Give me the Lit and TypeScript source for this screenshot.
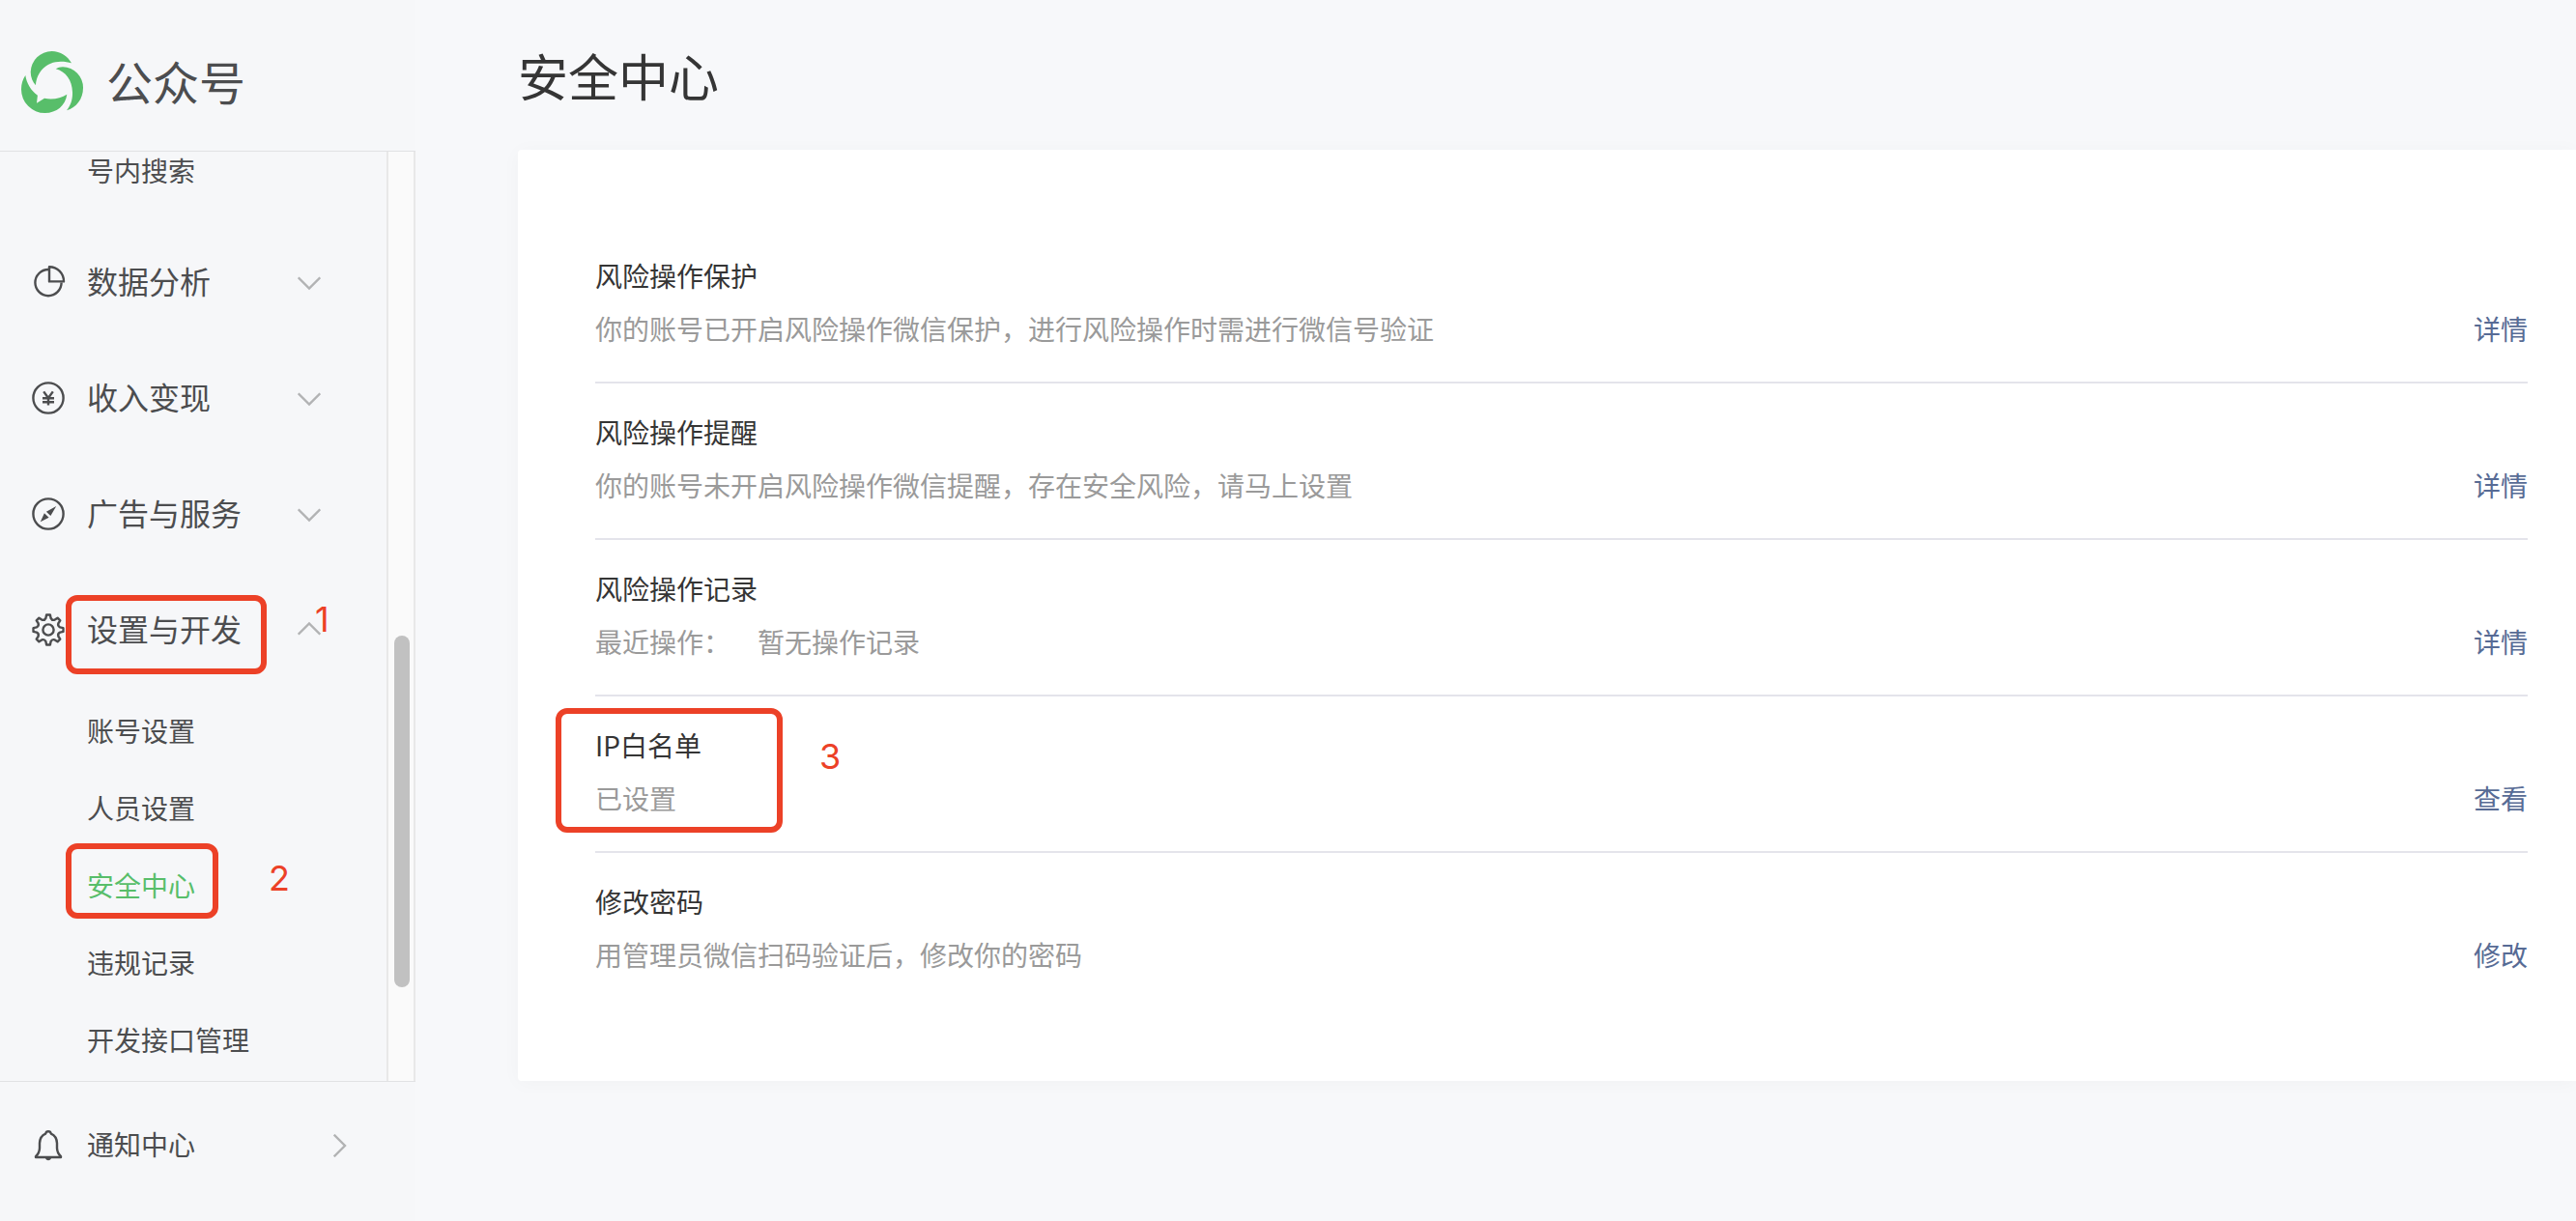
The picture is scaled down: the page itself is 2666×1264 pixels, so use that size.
import { LitElement, html, css, svg, nothing } from "lit";
import { customElement, property } from "lit/decorators.js";
import { classMap } from "lit/directives/class-map.js";

type IconName = "pie" | "yen" | "compass" | "gear" | "bell";

interface Group {
  icon: IconName;
  label: string;
  open?: boolean;
  mark?: string;
}

interface SubItem {
  label: string;
  active?: boolean;
  mark?: string;
}

interface SecurityRow {
  title: string;
  desc: string;
  extra?: string;
  action: string;
  mark?: string;
}

const GROUPS: Group[] = [
  { icon: "pie", label: "数据分析" },
  { icon: "yen", label: "收入变现" },
  { icon: "compass", label: "广告与服务" },
  { icon: "gear", label: "设置与开发", open: true, mark: "1" },
];

const SETTINGS: SubItem[] = [
  { label: "账号设置" },
  { label: "人员设置" },
  { label: "安全中心", active: true, mark: "2" },
  { label: "违规记录" },
  { label: "开发接口管理" },
];

const ROWS: SecurityRow[] = [
  {
    title: "风险操作保护",
    desc: "你的账号已开启风险操作微信保护，进行风险操作时需进行微信号验证",
    action: "详情",
  },
  {
    title: "风险操作提醒",
    desc: "你的账号未开启风险操作微信提醒，存在安全风险，请马上设置",
    action: "详情",
  },
  { title: "风险操作记录", desc: "最近操作：", extra: "暂无操作记录", action: "详情" },
  { title: "IP白名单", desc: "已设置", action: "查看", mark: "3" },
  { title: "修改密码", desc: "用管理员微信扫码验证后，修改你的密码", action: "修改" },
];

/** Outline of an eight-toothed gear centred in a 36-unit box. */
function gearPath(): string {
  const at = (deg: number, r: number) => {
    const a = (deg * Math.PI) / 180;
    return `${(18 + r * Math.sin(a)).toFixed(2)} ${(18 - r * Math.cos(a)).toFixed(2)}`;
  };
  let d = "";
  for (let i = 0; i < 8; i++) {
    const c = i * 45;
    d += `${i ? "L" : "M"}${at(c - 7, 15.6)}L${at(c + 7, 15.6)}L${at(c + 12, 12.4)}`;
    d += `Q${at(c + 22.5, 10.2)} ${at(c + 33, 12.4)}`;
  }
  return d + "Z";
}

const ICONS = {
  pie: svg`<path d="M18 5A13.6 13.6 0 1 0 31.6 18.6"/><path d="M19 2.2V17.4H34A15 15 0 0 0 19 2.2Z"/>`,
  yen: svg`<circle cx="18" cy="18" r="15.6"/>
    <path d="M13.2 11.4L18 18L22.8 11.4M18 18V25.6M12 18.3H24M12 22.3H24"/>`,
  compass: svg`<circle cx="18" cy="18" r="15.6"/>
    <path class="solid" d="M26.2 10L15.9 15.7L20.4 19.9ZM9.8 26.2L13.9 17.3L18.6 21.7Z"/>`,
  gear: svg`<path d=${gearPath()}/><circle cx="18" cy="18" r="5.6"/>`,
  bell: svg`<path d="M5 29.2C8 26.4 8.8 24.6 9 20.6V15.4C9.2 10.6 11.4 7.2 15.2 5.6C15.8 2.4 20.2 2.4 20.8 5.6C24.6 7.2 26.8 10.6 27 15.4V20.6C27.2 24.6 28 26.4 31 29.2V30H5Z"/>
    <path class="solid" d="M14.8 30H21.2C20.8 34.4 15.2 34.4 14.8 30Z"/>`,
};

@customElement("mp-icon")
export class MpIcon extends LitElement {
  @property() name: IconName = "pie";

  static styles = css`
    :host {
      display: block;
      flex: none;
      width: 36px;
      height: 36px;
    }
    .icon {
      display: block;
      fill: none;
      stroke: currentColor;
      stroke-width: 2.4;
      stroke-linejoin: round;
    }
    .solid {
      fill: currentColor;
      stroke: none;
    }
  `;

  render() {
    return html`<svg class="icon" viewBox="0 0 36 36" aria-hidden="true">${ICONS[this.name]}</svg>`;
  }
}

@customElement("mp-chevron")
export class MpChevron extends LitElement {
  @property() dir: "up" | "down" | "right" = "down";

  static styles = css`
    :host {
      display: block;
      flex: none;
      width: 24px;
      height: 24px;
      margin-left: auto;
    }
    .chevron {
      display: block;
      fill: none;
      stroke: #b2b3b4;
      stroke-width: 2.4;
    }
  `;

  render() {
    const d = {
      down: "M0.7 7.3L12 18.6L23.3 7.3",
      up: "M0.7 16.7L12 5.4L23.3 16.7",
      right: "M5.7 0.7L17 12L5.7 23.3",
    }[this.dir];
    return html`<svg class="chevron" viewBox="0 0 24 24" aria-hidden="true"><path d=${d} /></svg>`;
  }
}

@customElement("app-root")
export class AppRoot extends LitElement {
  static styles = css`
    :host {
      display: flex;
      min-height: 100vh;
      background: #f7f8fa;
      color: #353535;
      font-family: "Noto Sans CJK SC", "PingFang SC", sans-serif;
      font-size: 28px;
      line-height: 46px;
    }
    * {
      box-sizing: border-box;
    }
    a {
      color: inherit;
      text-decoration: none;
    }

    .sidebar {
      flex: none;
      display: flex;
      flex-direction: column;
      width: 430px;
      height: 100vh;
      background: #f6f7f9;
      color: #4c4d4f;
    }
    .brand {
      flex: none;
      display: flex;
      align-items: center;
      gap: 24px;
      height: 157px;
      padding: 14px 22px 0;
      border-bottom: 1px solid #e1e2e4;
      font-size: 48px;
      line-height: 64px;
    }
    .logo {
      width: 64px;
      height: 64px;
      fill: #58be6a;
    }
    .label {
      padding-bottom: 4px;
    }
    .scroller {
      flex: 1;
      display: flex;
      min-height: 0;
      overflow: hidden;
    }
    .menu {
      flex: 1;
      margin: -19px 0 0;
    }
    .track {
      flex: none;
      width: 30px;
      padding: 501px 4px 0 6px;
      background: #fafafa;
      border: solid #e8e8e8;
      border-width: 0 2px;
    }
    .thumb {
      height: 364px;
      border-radius: 8px;
      background: #c1c1c1;
    }
    .group {
      position: relative;
      display: flex;
      align-items: center;
      gap: 22px;
      width: 100%;
      height: 120px;
      padding: 0 68px 0 32px;
      border: 0;
      background: none;
      color: inherit;
      font: inherit;
      font-size: 32px;
      text-align: left;
      cursor: pointer;
    }
    .sub {
      padding: 6px 0 14px;
    }
    .sub.tail {
      padding-top: 0;
    }
    .item {
      position: relative;
      display: flex;
      align-items: center;
      height: 80px;
      padding: 0 0 4px 90px;
    }
    .item.active {
      color: #58be6a;
    }
    .notice {
      flex: none;
      display: flex;
      align-items: center;
      gap: 22px;
      height: 145px;
      padding: 0 66px 12px 32px;
      border-top: 1px solid #e1e2e4;
    }

    .main {
      flex: 1;
      min-width: 0;
      padding: 48px 0 48px 106px;
    }
    .heading {
      margin: 0 0 47px;
      font-size: 52px;
      font-weight: 400;
      line-height: 60px;
    }
    .card {
      padding: 80px 50px 76px 80px;
      border-radius: 4px 0 0 4px;
      background: #fff;
      box-shadow: 0 2px 20px rgba(0, 0, 0, 0.03);
    }
    .row {
      position: relative;
      display: flex;
      align-items: flex-end;
      justify-content: space-between;
      padding: 27px 0 32px;
    }
    .row + .row {
      border-top: 2px solid #e4e4eb;
    }
    .title {
      margin: 0 0 9px;
      font-size: 28px;
      font-weight: 400;
    }
    .desc {
      display: flex;
      gap: 28px;
      margin: 0;
      color: #9a9a9a;
    }
    .row .action {
      color: #576b95;
    }

    /* Callouts laid over the elements they point at */
    .box {
      position: absolute;
      border: 6px solid #ec4127;
      border-radius: 12px;
      pointer-events: none;
    }
    .num {
      position: absolute;
      color: #ec4127;
      font-family: Inter, sans-serif;
      font-size: 36px;
      line-height: 36px;
      pointer-events: none;
    }
    .box1 {
      inset: 24px 124px 14px 68px;
    }
    .num1 {
      top: 31px;
      left: 326px;
    }
    .box2 {
      inset: -5px 174px 7px 68px;
    }
    .num2 {
      top: 13px;
      left: 278px;
    }
    .box3 {
      top: 12px;
      bottom: 19px;
      left: -41px;
      width: 235px;
    }
    .num3 {
      top: 44px;
      left: 232px;
    }
  `;

  private callout(mark?: string) {
    if (!mark) return nothing;
    return html`<span class="box box${mark}"></span><span class="num num${mark}">${mark}</span>`;
  }

  private renderSidebar() {
    return html`
      <aside class="sidebar">
        <div class="brand">
          <svg class="logo" viewBox="0 0 64 64" aria-hidden="true">
            <path d="M52 12.3C48 5 40.5 0 31.6 0A22 22 0 0 0 9.7 21.5C9.7 27 11.8 32 15 35.3C15.8 22 25.5 10.8 41 10.8C45 10.8 49 11.5 52 12.3Z" />
            <path d="M35.7 18.3C38 17 40 16.3 43 16.3A21.5 21.5 0 0 1 64 38C64 49.5 57 58.3 47 61.3C51 56.5 53.3 50 53 42.5C52.7 30 46 21 35.7 18.3Z" />
            <path d="M4.3 25C1.5 29 0 34 0 39.5A24.5 24.5 0 0 0 24.5 64C36.5 64 46 56 47.3 44.7C41 48.7 32 50.7 24 48.7L16 53.7L16.9 45.7C10 41 5.5 33 4.3 25Z" />
          </svg>
          <span class="label">公众号</span>
        </div>
        <div class="scroller">
          <nav class="menu">
            <div class="sub tail"><a class="item" href="#">号内搜索</a></div>
            ${GROUPS.map(
              (g) => html`
                <button class="group" type="button" aria-expanded=${g.open ? "true" : "false"}>
                  <mp-icon name=${g.icon}></mp-icon>
                  <span class="label">${g.label}</span>
                  <mp-chevron dir=${g.open ? "up" : "down"}></mp-chevron>
                  ${this.callout(g.mark)}
                </button>
              `
            )}
            <div class="sub">
              ${SETTINGS.map(
                (s) => html`
                  <a class=${classMap({ item: true, active: !!s.active })} href="#"
                    >${s.label}${this.callout(s.mark)}</a
                  >
                `
              )}
            </div>
          </nav>
          <div class="track"><div class="thumb"></div></div>
        </div>
        <a class="notice" href="#">
          <mp-icon name="bell"></mp-icon>
          <span class="label">通知中心</span>
          <mp-chevron dir="right"></mp-chevron>
        </a>
      </aside>
    `;
  }

  render() {
    return html`
      ${this.renderSidebar()}
      <main class="main">
        <h1 class="heading">安全中心</h1>
        <section class="card">
          ${ROWS.map(
            (r) => html`
              <div class="row">
                <div>
                  <h2 class="title">${r.title}</h2>
                  <p class="desc">
                    <span>${r.desc}</span>${r.extra ? html`<span>${r.extra}</span>` : nothing}
                  </p>
                </div>
                <a class="action" href="#">${r.action}</a>
                ${this.callout(r.mark)}
              </div>
            `
          )}
        </section>
      </main>
    `;
  }
}
